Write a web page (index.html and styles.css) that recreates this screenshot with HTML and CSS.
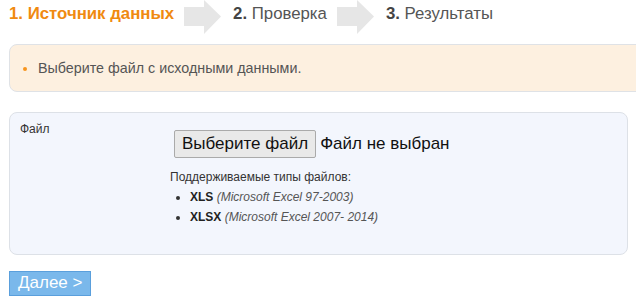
FILE: index.html
```html
<!DOCTYPE html>
<html lang="ru">

<head>
  <meta charset="UTF-8">
  <meta name="viewport" content="width=device-width, initial-scale=1.0">
  <title>Импорт данных</title>
  <link rel="stylesheet" href="styles.css">
</head>

<body>
  <div class="page">
    <div class="steps">
      <div class="step active"><b>1.</b> Источник данных</div>
      <svg class="arrow" width="38" height="34" viewBox="0 0 38 34">
        <path d="M0 7H20V0L37 16.5L20 34V26H0Z" fill="#e6e6e6" />
      </svg>
      <div class="step"><b>2.</b> Проверка</div>
      <svg class="arrow" width="38" height="34" viewBox="0 0 38 34">
        <path d="M0 7H20V0L37 16.5L20 34V26H0Z" fill="#e6e6e6" />
      </svg>
      <div class="step"><b>3.</b> Результаты</div>
    </div>

    <div class="notice">
      <ul>
        <li>Выберите файл с исходными данными.</li>
      </ul>
    </div>

    <div class="form">
      <div class="label">Файл</div>
      <div class="field">
        <div class="fileInput">
          <span class="fileButton">Выберите файл</span>
          <span class="fileName">Файл не выбран</span>
        </div>
        <div class="hint">Поддерживаемые типы файлов:</div>
        <ul class="types">
          <li><b>XLS</b> <i>(Microsoft Excel 97-2003)</i></li>
          <li><b>XLSX</b> <i>(Microsoft Excel 2007- 2014)</i></li>
        </ul>
      </div>
    </div>

    <button class="next">Далее &gt;</button>
  </div>
</body>

</html>
```

FILE: styles.css
```css
body {
  margin: 0;
  font-family: "Liberation Sans", Arial, sans-serif;
  color: #555;
  overflow: hidden;
}
.page {
  padding-left: 9px;
  width: 619px;
}
.steps {
  display: flex;
  align-items: center;
  height: 34px;
  font-size: 16.8px;
}
.step {
  color: #555;
  margin-right: 10px;
  padding-bottom: 7px;
}
.step b {
  color: #444;
}
.step.active,
.step.active b {
  color: #f08a10;
  font-weight: bold;
}
.arrow {
  margin-right: 11px;
}
.notice {
  margin-top: 10px;
  margin-right: -30px;
  height: 46px;
  display: flex;
  align-items: center;
  background: #fdf0e0;
  border: 1px solid #dfe2e6;
  border-radius: 8px 0 0 8px;
}
.notice ul {
  margin: 0;
  padding-left: 28px;
  font-size: 14.3px;
  color: #555;
}
.notice li::marker {
  color: #f7941d;
}
.form {
  margin-top: 20px;
  height: 133px;
  display: grid;
  grid-template-columns: 150px 1fr;
  padding: 8px 10px 0;
  background: #f3f6fd;
  border: 1px solid #dde1e7;
  border-radius: 8px;
  font-size: 12px;
  color: #333;
}
.label {
  padding-top: 1px;
}
.field {
  padding-top: 9px;
}
.fileInput {
  display: flex;
  align-items: center;
  gap: 4px;
  margin-left: 4px;
  font-size: 17px;
  color: #111;
}
.fileButton {
  padding: 3px 7px;
  background: #e9e9e9;
  border: 1px solid #aaa;
  border-radius: 2px;
}
.hint {
  margin-top: 9px;
  line-height: 20px;
}
.types {
  margin: 0;
  padding-left: 20px;
  line-height: 20px;
}
.types b {
  color: #222;
}
.types i {
  color: #555;
}
.next {
  margin-top: 16px;
  padding: 1px 8px 2px;
  font-family: "Liberation Sans", Arial, sans-serif;
  font-size: 17px;
  color: #fff;
  background: #7ab8eb;
  border: 1px solid #5a9fdc;
  border-radius: 0;
}
```
